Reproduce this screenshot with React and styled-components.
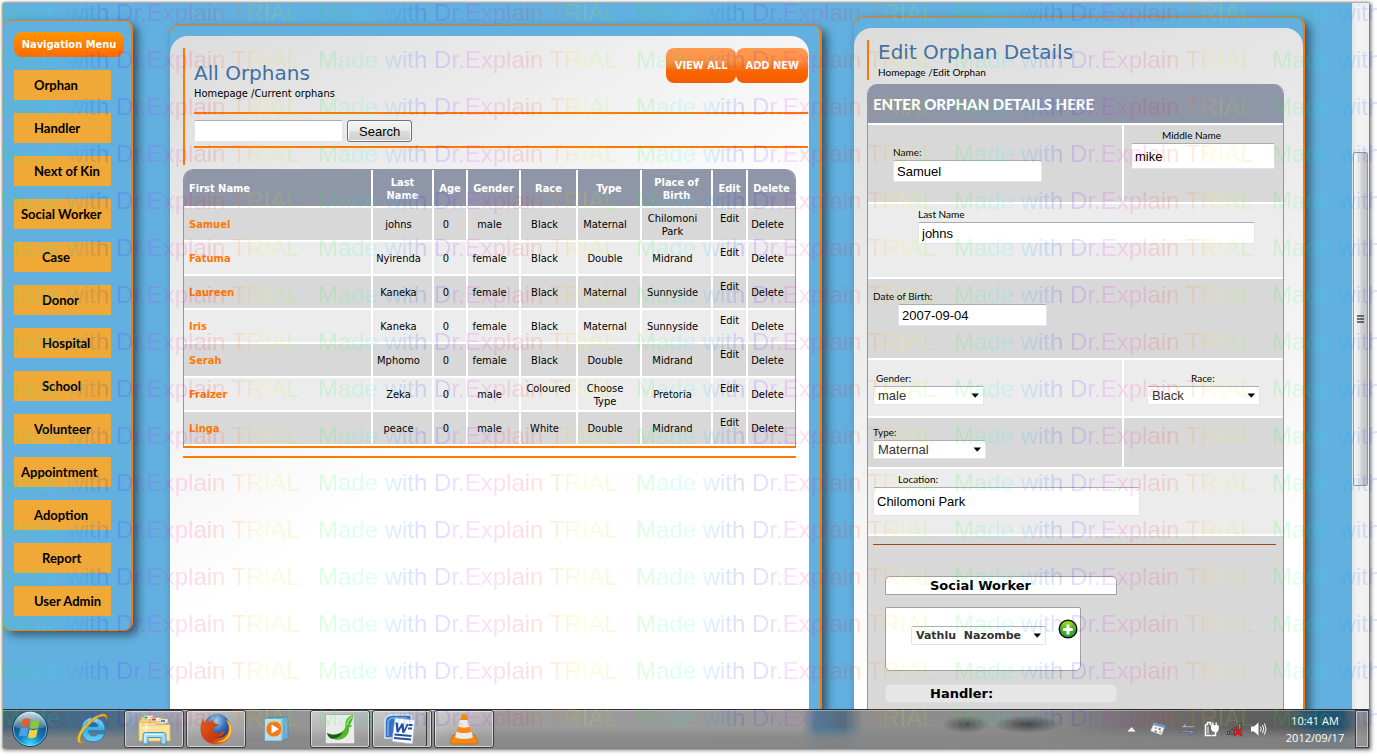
import React from 'react';
import styled, { createGlobalStyle, css } from 'styled-components';

const ui = '"DejaVu Sans Condensed", "DejaVu Sans", sans-serif';
const wide = '"DejaVu Sans", sans-serif';
const humanist = 'Lato, sans-serif';
const control = '"Liberation Sans", Arial, sans-serif';
const orange = '#ff7800';
const slate = '#8f96a8';

const Global = createGlobalStyle`
  * { box-sizing: border-box; }
  html, body { margin: 0; height: 100%; background: #fff; }
  body { font: 11px/13px ${ui}; color: #000; }
  a { color: inherit; text-decoration: none; }
  h1, h2, p { margin: 0; font-weight: normal; }
  button, input, select { font-family: ${control}; font-size: 13px; margin: 0; }
`;

const Screen = styled.div`
  position: relative;
  height: 100vh;
  padding: 3px 8px 8px 3px;
  overflow: hidden;
`;

const Desktop = styled.div`
  height: 100%;
  display: flex;
  flex-direction: column;
  overflow: hidden;
  background: #62b0df;
  box-shadow: 0 0 2px rgba(0, 0, 0, 0.4), 1px 1px 4px 1px rgba(0, 0, 0, 0.55);
`;

const Browser = styled.div`
  flex: 1;
  min-height: 0;
  display: flex;
`;

const Page = styled.div`
  flex: 1;
  min-width: 0;
  display: flex;
  align-items: flex-start;
  padding-right: 47px;
  overflow: hidden;
`;

const frame = css`
  border: 1px solid ${orange};
  border-right-width: 2px;
  border-radius: 9px;
  box-shadow: 5px 4px 10px rgba(0, 0, 0, 0.5);
`;

/* ---------- navigation ---------- */

const Nav = styled.nav`
  ${frame}
  width: 131px;
  flex: none;
  margin: 17px 36px 0 -1px;
  padding: 11px 7px 14px 11px;
  display: flex;
  flex-direction: column;
  align-items: flex-start;
  gap: 13px;
`;

const NavTitle = styled.h2`
  align-self: stretch;
  height: 25px;
  border-radius: 8px;
  background: linear-gradient(#ff9500, #ff6a00);
  color: #fff;
  font: bold 11px/25px ${ui};
  text-align: center;
  white-space: nowrap;
`;

const indents = { near: '7px', middle: '20px', far: '28px' };

const NavItem = styled.a`
  width: 97px;
  height: 30px;
  padding-left: ${(p) => indents[p.$indent]};
  background: #f0a836;
  font: 700 13px/30px ${humanist};
  white-space: nowrap;
`;

/* ---------- shared panel parts ---------- */

const Panel = styled.section`
  ${frame}
  flex: ${(p) => p.$grow} 1 0;
  min-width: 0;
  height: 1100px;
  margin-top: ${(p) => p.$top};
  margin-right: ${(p) => p.$after || 0};
  padding: 10px ${(p) => p.$gutter || 0} 0 0;
`;

const Sheet = styled.div`
  height: 100%;
  padding-top: 12px;
  border-radius: 18px 18px 0 0;
  background: ${(p) => p.$fill};
`;

const Title = styled.h1`
  color: #416fa3;
  font: 20px/24px ${wide};
`;

const Rule = styled.hr`
  margin: 0;
  border: 0;
  height: 1px;
  background: #9a4a10;
`;

const TextBox = styled.input`
  display: block;
  width: ${(p) => p.$width};
  height: ${(p) => p.$height || '22px'};
  margin-left: ${(p) => p.$inset || 0};
  padding: 0 3px;
  border: 1px solid #e3e4ea;
  border-top-color: #abadb3;
  border-radius: 2px;
  background: #fff;
  color: #000;
`;

/* ---------- orphan list ---------- */

const ListHeader = styled.header`
  margin-left: 13px;
  padding-left: 9px;
  height: 117px;
  border-left: 2px solid ${orange};
`;

const ListTop = styled.div`
  display: flex;
  justify-content: space-between;
  height: 64px;
  margin-right: 1px;
`;

const ListHeading = styled.div`
  padding-top: 13px;
`;

const Crumbs = styled.p`
  padding-top: 2px;
  font: ${(p) => p.$font};
`;

const Actions = styled.div`
  display: flex;
`;

const ActionButton = styled.button`
  height: 35px;
  padding: 0 9px;
  border: 0;
  border-radius: 8px;
  background: linear-gradient(#ff9a50, #ff9040 38%, #fa6400 68%, #f25c00);
  color: #fff;
  font: bold 11px/13px ${ui};
`;

const SearchBar = styled.form`
  display: flex;
  gap: 4px;
  padding: 6px 0 4px;
  margin-right: 1px;
  border: solid ${orange};
  border-width: 2px 0;
`;

const SearchButton = styled.button`
  height: 22px;
  padding: 0 11px;
  border: 1px solid #707070;
  border-radius: 3px;
  background: linear-gradient(#f3f3f3, #ebebeb 49%, #dcdcdc 50%, #cfcfcf);
  box-shadow: inset 0 0 0 1px #fafafa;
  color: #000;
`;

const ListBody = styled.div`
  margin: 4px 13px 0;
`;

const Table = styled.table`
  width: 100%;
  table-layout: fixed;
  border-spacing: 0;
  border: 1px solid ${slate};
  border-bottom: 0;
  border-radius: 10px 10px 0 0;
  overflow: hidden;
  font: 11px/13px ${ui};

  th, td {
    height: 34px;
    padding: 1px 0 0;
    text-align: center;
    border: solid #fff;
    border-width: 0 2px 2px 0;
  }
  th:last-child, td:last-child { border-right: 0; }
  th { height: 38px; background: ${slate}; color: #fff; }
  th:first-child { text-align: left; padding-left: 5px; }
  td { padding-right: 8px; }
  tr:nth-child(odd) td { background: #d8d8d8; }
  tr:nth-child(even) td { background: #ececec; }
`;

const NameCell = styled.td`
  && { text-align: left; padding: 1px 0 0 5px; }
  color: ${orange};
  font-weight: bold;
`;

const TopCell = styled.td`
  && { vertical-align: top; padding: 4px 0 0; }
`;

const ListEnd = styled.div`
  height: 12px;
  border: solid ${orange};
  border-width: 2px 0;
`;

/* ---------- edit form ---------- */

const EditBody = styled.div`
  padding: 0 19px 0 13px;
`;

const EditHeader = styled.header`
  height: 40px;
  padding-left: 9px;
  border-left: 2px solid ${orange};
`;

const Form = styled.form`
  margin-top: 4px;
  border: 1px solid ${slate};
  border-width: 0 1px;
  border-radius: 10px 10px 0 0;
  overflow: hidden;
`;

const FormTitle = styled.h2`
  height: 41px;
  padding-left: 5px;
  background: ${slate};
  border-bottom: 2px solid #fff;
  color: #fff;
  font: 900 15px/41px ${humanist};
`;

const FormRow = styled.div`
  display: grid;
  grid-template-columns: ${(p) => (p.$split ? 'minmax(0, 1fr) 159px' : 'minmax(0, 1fr)')};
  gap: 2px;
  min-height: ${(p) => p.$height};
  background: #fff;
  border-bottom: 2px solid #fff;
`;

const Cell = styled.div`
  padding: ${(p) => p.$pad || 0};
  background: ${(p) => (p.$dark ? '#d8d8d8' : '#ececec')};
`;

const Label = styled.label`
  display: block;
  margin-bottom: 2px;
  padding-left: ${(p) => p.$indent || 0};
  font: 10px/12px ${humanist};
`;

const SelectShell = styled.span`
  display: inline-grid;
  width: ${(p) => p.$width};

  > * { grid-area: 1 / 1; }
  > svg { align-self: center; justify-self: end; margin-right: 4px; pointer-events: none; }
`;

const Select = styled.select`
  appearance: none;
  width: 100%;
  height: 19px;
  padding: 0 4px;
  border: 1px solid #e3e4ea;
  border-top-color: #abadb3;
  border-radius: 2px;
  background: #fff;
  color: #333;
  ${(p) => p.$bold && css`font: bold 11px/15px ${wide};`}
`;

const Staff = styled.div`
  height: 400px;
  padding: 8px 7px 0 5px;
  background: #d8d8d8;
`;

const StaffTitle = styled.h2`
  width: 232px;
  height: 19px;
  margin: ${(p) => p.$gap} 0 0 12px;
  padding-left: 44px;
  border: 1px solid ${(p) => (p.$plain ? '#dcdcdc' : '#a0a0a0')};
  border-radius: ${(p) => (p.$plain ? '5px' : '5px 5px 0 0')};
  background: ${(p) => (p.$plain ? '#e6e6e6' : '#fff')};
  font: bold 13px/17px ${wide};
`;

const StaffBox = styled.div`
  display: flex;
  align-items: flex-start;
  justify-content: space-between;
  width: 196px;
  height: 64px;
  margin: 12px 0 0 12px;
  padding: 11px 2px 0 25px;
  border: 1px solid #a0a0a0;
  border-radius: 2px 2px 5px 5px;
  background: #fff;

  > span { margin-top: 7px; }
`;

const AddButton = styled.button`
  width: 20px;
  height: 20px;
  padding: 0;
  border: 0;
  background: none;
  svg { display: block; }
`;

/* ---------- scroll bar ---------- */

const ScrollTrack = styled.div`
  width: 17px;
  flex: none;
  padding: 149px 1px 0;
  background: linear-gradient(90deg, #e4e4e4, #f2f2f2 30%, #f0f0f0);
`;

const ScrollThumb = styled.div`
  display: flex;
  align-items: center;
  justify-content: center;
  height: 334px;
  border: 1px solid #979797;
  border-radius: 2px;
  background: linear-gradient(90deg, #f6f6f6, #e6e6e8 45%, #cfd0d4 55%, #c0c2c8);
`;

/* ---------- task bar ---------- */

const TaskBar = styled.footer`
  flex: none;
  display: flex;
  align-items: center;
  height: 39px;
  padding-left: 8px;
  border-top: 1px solid #2a2c30;
  box-shadow: inset 0 1px 0 rgba(255, 255, 255, 0.35);
  background:
    radial-gradient(24px 9px at 70.5% 38%, rgba(40, 40, 40, 0.6), transparent),
    radial-gradient(34px 9px at 75% 38%, rgba(40, 40, 40, 0.7), transparent),
    linear-gradient(rgba(134, 134, 134, 0) 45%, rgba(134, 134, 134, 0.85) 75%),
    linear-gradient(90deg, #45637b, #4d6c86 10%, #8f8f8f 14%, #9c9c9c 30%, #9a9a9a 58.5%, #4f7c98 59.5%, #4a7188 61.5%, #8e8e8e 63%, #8c8c8c 76%, #757575 82%, #626262 90%, #5c5c5c 94%, #24516b 96%, #24516b 98%, #666 99%);
`;

const Orb = styled.button`
  width: 38px;
  height: 38px;
  margin-right: 13px;
  padding: 0;
  border: 0;
  background: none;
  svg { display: block; }
`;

const Tasks = styled.div`
  flex: 1;
  display: flex;
  gap: 2px;
`;

const Task = styled.button`
  display: flex;
  align-items: center;
  justify-content: center;
  width: 60px;
  height: 38px;
  padding: 0;
  border: 1px solid transparent;
  border-radius: 3px;
  background: none;
  ${(p) => p.$open && css`
    border-color: #3c3c3c;
    box-shadow: inset 0 0 0 1px rgba(255, 255, 255, 0.55);
    background: linear-gradient(160deg, rgba(255, 255, 255, 0.5), rgba(255, 255, 255, 0.2) 55%, rgba(255, 255, 255, 0.12));
  `}
  ${(p) => p.$stacked && css`
    padding-right: 5px;
    box-shadow: inset 0 0 0 1px rgba(255, 255, 255, 0.55), inset -4px 0 0 #a8a8a8, inset -5px 0 0 #3c3c3c;
  `}
`;

const Tray = styled.div`
  display: flex;
  align-items: center;
  gap: 7px;
  svg { display: block; }
`;

const Clock = styled.time`
  width: 74px;
  padding-left: 8px;
  color: #fff;
  font: 11px/17px "Open Sans", sans-serif;
  text-align: center;
  white-space: nowrap;
`;

const ShowDesktop = styled.button`
  width: 14px;
  height: 38px;
  padding: 0;
  border: 1px solid #3c3c3c;
  box-shadow: inset 0 0 0 1px rgba(255, 255, 255, 0.45);
  background: linear-gradient(135deg, rgba(255, 255, 255, 0.3), rgba(255, 255, 255, 0.1));
`;

/* ---------- trial watermark ---------- */

const Watermark = styled.div`
  position: absolute;
  inset: 0;
  overflow: hidden;
  pointer-events: none;
  opacity: 0.13;
  font: 24px/25px ${control};
`;

const WatermarkRow = styled.div`
  display: flex;
  height: 47px;
`;

const WatermarkText = styled.span`
  flex: none;
  width: 318px;
  height: 27px;
  white-space: nowrap;
  color: transparent;
  background: linear-gradient(90deg, #0f0, #0ff, #00f, #f0f, #f00, #ff0, #0f0);
  background-clip: text;
  -webkit-background-clip: text;
`;

/* ---------- drawings ---------- */

const Caret = () => (
  <svg width="9" height="5" viewBox="0 0 9 5" aria-hidden="true"><path d="M0.5 0.5H8L4.5 4.5H4z" fill="#000" /></svg>
);

const PlusIcon = () => (
  <svg width="20" height="20" viewBox="0 0 20 20" aria-hidden="true">
    <defs>
      <linearGradient id="plus" x1="0" y1="0" x2="0" y2="1">
        <stop offset="0" stopColor="#a5e31b" /><stop offset="0.5" stopColor="#4fb81c" /><stop offset="1" stopColor="#23a033" />
      </linearGradient>
    </defs>
    <circle cx="10" cy="10" r="8.8" fill="url(#plus)" stroke="#111" strokeWidth="1.4" />
    <path d="M10 5.5v10M5 10.5h10" stroke="#fff" strokeWidth="3" />
  </svg>
);

const OrbIcon = () => (
  <svg width="38" height="38" viewBox="0 0 38 38" aria-hidden="true">
    <defs>
      <radialGradient id="orb" cx="0.5" cy="0.95" r="0.9">
        <stop offset="0" stopColor="#3fe0ff" /><stop offset="0.35" stopColor="#1285c4" /><stop offset="0.75" stopColor="#1a4c7c" /><stop offset="1" stopColor="#4a7ba6" />
      </radialGradient>
      <linearGradient id="gloss" x1="0" y1="0" x2="0" y2="1">
        <stop offset="0" stopColor="#fff" stopOpacity="0.75" /><stop offset="1" stopColor="#fff" stopOpacity="0.15" />
      </linearGradient>
    </defs>
    <circle cx="19" cy="19" r="17.5" fill="url(#orb)" stroke="#1c3c5a" />
    <circle cx="19" cy="19" r="16.5" fill="none" stroke="#a9d4ee" strokeOpacity="0.7" />
    <path d="M3.5 17a15.5 15.5 0 0 1 31 0c-9 3-22 3-31 0z" fill="url(#gloss)" />
    <path d="M11.5 9.5c3-1.700 5.500-1.500 8-.2l-1.700 8c-2.500-1.300-5-1.300-8 0z" fill="#e9592a" />
    <path d="M20.600 9.900c2.700 1.300 5.200 1.300 8.200-.2l-1.700 8c-3 1.500-5.500 1.500-8.200.2z" fill="#8fc63d" />
    <path d="M9.500 18.600c3-1.400 5.500-1.300 8 0l-1.700 8c-2.500-1.300-5-1.300-8 0z" fill="#4da3e0" />
    <path d="M18.600 19.200c2.700 1.300 5.200 1.300 8.200-.2l-1.700 8c-3 1.500-5.500 1.500-8.200.2z" fill="#fbd03b" />
  </svg>
);

const ExplorerIcon = () => (
  <svg width="34" height="34" viewBox="0 0 34 34" aria-hidden="true">
    <defs>
      <linearGradient id="ie" x1="0" y1="0" x2="0" y2="1">
        <stop offset="0" stopColor="#8fe2fb" /><stop offset="0.5" stopColor="#35aee8" /><stop offset="1" stopColor="#6fd0f6" />
      </linearGradient>
    </defs>
    <path d="M18 5.500c7 0 12.500 5 12.200 13.200H13.600c.3 3.500 2.200 5.300 5 5.300 2 0 3.300-.9 4-2.300h7c-1.500 5-5.700 8-11.200 8C11.300 29.700 6.500 25 6.500 17.700 6.500 10.300 11.200 5.500 18 5.500zm-4.300 9.200h9.400c-.2-2.700-2-4.300-4.600-4.300s-4.400 1.600-4.800 4.300z" fill="url(#ie)" stroke="#1677b8" strokeWidth="0.8" />
    <path d="M31.500 9C33 5 32 1.800 28.500 1.800 21 1.800 5 14.500 2.600 25.500c-1 5 2 6.800 6.200 4.700-2.800.6-4-.6-3.600-3.400C6.500 18 19.500 5.500 27.500 4.200c3-.5 4 1.500 4 4.800z" fill="#f6c22c" stroke="#b98a10" strokeWidth="0.600" />
  </svg>
);

const FolderIcon = () => (
  <svg width="36" height="32" viewBox="0 0 36 32" aria-hidden="true">
    <path d="M3 7h2V4h12v3h13v21H3z" fill="#f1d277" stroke="#c7a147" strokeWidth="0.800" />
    <path d="M8 2.500h9v4H8zM15 4.500h10v4H15zM23 6h9v4h-9z" fill="#fbf7e8" stroke="#ccb675" strokeWidth="0.600" />
    <path d="M8.500 3.500h3v2h-3z" fill="#1fae3b" /><path d="M16 5.500h4v2h-4z" fill="#e24535" /><path d="M25 7h4v2h-4z" fill="#3b8fe0" />
    <path d="M3 9.500h15l3 2h13V28H3z" fill="#f9e49a" stroke="#d8b65a" strokeWidth="0.700" />
    <path d="M7 31v-9q0-2.500 2.500-2.500h18Q30 19.500 30 22v9h-5v-6.500H12V31z" fill="#a4d9f2" stroke="#3d8fbb" strokeWidth="0.900" />
    <path d="M9 29v-6.500q0-1 1-1h17" fill="none" stroke="#e6f8ff" strokeWidth="1.200" />
    <path d="M10 11v8M6 15h8" stroke="#fff" strokeWidth="1" opacity="0.800" />
  </svg>
);

const FirefoxIcon = () => (
  <svg width="34" height="34" viewBox="0 0 34 34" aria-hidden="true">
    <defs>
      <radialGradient id="globe" cx="0.45" cy="0.25" r="0.8"><stop offset="0" stopColor="#9fd8f8" /><stop offset="0.500" stopColor="#2b6fc0" /><stop offset="1" stopColor="#152a66" /></radialGradient>
      <linearGradient id="fox" x1="0" y1="0" x2="1" y2="1"><stop offset="0" stopColor="#e2611b" /><stop offset="0.600" stopColor="#c9390f" /><stop offset="1" stopColor="#f39a1f" /></linearGradient>
    </defs>
    <circle cx="18" cy="15" r="13" fill="url(#globe)" />
    <path d="M4 6c0 2 .4 3 1.500 4 2-1 4-1 6 0 .5-1.500 1.500-2.500 3-3-.5 2 0 3.500 1.500 4.500l3.500 1c-.2 1.800-2.500 2-4 3-1 1-.5 2.500-1.500 3.500 2.500 3 6.500 2.500 9 .5 1.500-1 3-.5 2.500 1-1.500 3.500-6 5-9.500 4.500 7 2.500 13-1.500 13.500-8.500.2-4-1-7-3-9.500 4 2 6 6 6 10.500C32.500 26.500 26 32.500 17.500 32.500 8.500 32.500 1.500 26 1.500 17.500 1.500 13 2.500 9 4 6z" fill="url(#fox)" />
    <path d="M27 8c4 5 4.500 12 .5 17-2.500 3-6 4.500-10 4.500 7 2 14-3 15-10.500.5-5-1.500-9-5.500-11z" fill="#fcc934" />
  </svg>
);

const MediaIcon = () => (
  <svg width="32" height="30" viewBox="0 0 32 30" aria-hidden="true">
    <path d="M8 3h18v22H8z" fill="#6db4d8" stroke="#3d86b0" strokeWidth="0.700" />
    <path d="M5 3.500h17V26H5z" fill="#8dcbe8" stroke="#3d86b0" strokeWidth="0.700" />
    <path d="M2.500 4.500H20V27H2.500z" fill="#b4dff2" stroke="#5698bd" strokeWidth="0.700" />
    <circle cx="12" cy="15" r="8" fill="#ee7a1c" stroke="#fbc18a" />
    <path d="M9.500 10.500v9l7.500-4.500z" fill="#fff" />
  </svg>
);

const DrExplainIcon = () => (
  <svg width="34" height="32" viewBox="0 0 34 32" aria-hidden="true">
    <path d="M2.500 1.500h29v29h-29z" fill="#e9ece9" stroke="#aaa" strokeWidth="0.800" />
    <path d="M30 2c-4 1-7 4-7.500 8-.3 2 .5 3-.5 5-2 4-6 6-10.500 6.500-3 .2-5.500-.3-7.500-2 2.500 6.500 11 9.500 17 5.500 4-2.700 5.500-6.500 5-10.500 1.500-.3 2.500-1.200 3-2.500-1 .2-1.800 0-2.300-.6 2-2 3.500-5 3.300-9.400z" fill="#57b52c" />
    <path d="M4 20c4.500 2.500 11 2.700 16-1.500-2 5-7 8-12 7-2.500-1-3.500-3-4-5.500z" fill="#145f1a" />
    <path d="M29 4c-3 2-4.500 4.500-5 8" fill="none" stroke="#b6e59a" strokeWidth="1.200" />
  </svg>
);

const WordIcon = () => (
  <svg width="34" height="32" viewBox="0 0 34 32" aria-hidden="true">
    <path d="M2 25V9q0-7 8-7h18v23z" fill="#3a6fc0" stroke="#dce8f8" strokeWidth="1.400" />
    <path d="M5 23V10q0-5 6-5h13" fill="none" stroke="#7eb0ea" strokeWidth="1.500" />
    <path d="M12 5l20 2-2.500 24L9 28.500z" fill="#fff" stroke="#9fb4d4" strokeWidth="0.800" />
    <path d="M12.500 9.500l2.500.3.500 6 3-5.600 2 .2.800 6 2.500-5.700 2 .2-4.500 9-2-.2-.8-5.500-3 5.200-2-.2z" fill="#2450a0" />
    <path d="M25.500 12h4M25 15.500h4M11.500 21.500l17 1.500M11 25l17 1.500" stroke="#2450a0" strokeWidth="1.800" />
  </svg>
);

const ConeIcon = () => (
  <svg width="30" height="34" viewBox="0 0 30 34" aria-hidden="true">
    <path d="M4 23h22l3 7q0 2-2 2H3q-2 0-2-2z" fill="#f58a12" stroke="#c2600a" strokeWidth="0.700" />
    <path d="M13 2h4l7.500 24c-3 3-16 3-19 0z" fill="#f58a12" />
    <path d="M11.200 8h7.600l2 6.500c-3 1.500-8.600 1.500-11.600 0zM7.700 19.500c3 2 11.600 2 14.600 0l1.700 5.500c-3 2.500-15 2.500-18 0z" fill="#e9edf0" />
  </svg>
);

const TrayArrow = () => (
  <svg width="9" height="6" viewBox="0 0 9 6" aria-hidden="true"><path d="M0.500 5.500L4.500 1l4 4.500z" fill="#fff" /></svg>
);
const TrayFlag = () => (
  <svg width="30" height="16" viewBox="-7 0 30 16" aria-hidden="true">
    <path d="M4 2l11 3-3.500 9L.5 10z" fill="#f4f6fa" stroke="#98a8c0" strokeWidth="0.500" />
    <path d="M4 2l11 3-.8 2L3.200 4z" fill="#5aa0e0" />
    <path d="M5 6l2 .6-.6 1.600-2-.6zM9.500 10l2 .6-.6 1.600-2-.6z" fill="#f0a020" /><path d="M9 7l2 .6-.6 1.600-2-.6zM5 9.500l2 .6-.5 1.400-2-.6z" fill="#3a78d0" />
  </svg>
);
const TrayLinks = () => (
  <svg width="16" height="16" viewBox="0 0 16 16" aria-hidden="true">
    <path d="M1 6.500L6 2v3h9v1.500z" fill="#aab0b8" stroke="#555" strokeWidth="0.400" /><path d="M15 9.500L10 14.500v-3H1v-2z" fill="#8488c4" stroke="#444" strokeWidth="0.400" />
  </svg>
);
const TrayPower = () => (
  <svg width="16" height="18" viewBox="0 0 16 18" aria-hidden="true">
    <path d="M2.500 4.500h2v-2h3v2h1M8 15.500H2.500v-11" fill="none" stroke="#fff" strokeWidth="1.600" />
    <path d="M5 6.500v7" stroke="#fff" strokeWidth="1" />
    <path d="M8 6h7v3q-.5 2.500-2.500 3v3.500H8.500" fill="none" stroke="#fff" strokeWidth="1.500" /><path d="M8 6h7v3q-1 3-3.500 3T8 9z" fill="#fff" /><path d="M9.800 6V2.500M13.200 6V2.500" stroke="#fff" strokeWidth="1.400" />
  </svg>
);
const TrayNetwork = () => (
  <svg width="17" height="16" viewBox="0 0 17 16" aria-hidden="true">
    <path d="M1.500 10.500h2v3h-2zM5 8.500h2v5H5zM8.500 6h2v7.500h-2zM12.500 2.500h2.500v11h-2.500z" fill="#8a8a8a" stroke="#333" strokeWidth="0.800" />
    <path d="M8 7l8 8M16 7l-8 8" stroke="#e01010" strokeWidth="2" />
  </svg>
);
const TraySound = () => (
  <svg width="17" height="16" viewBox="0 0 17 16" aria-hidden="true">
    <path d="M1 5.500h3L8.500 1.500v13L4 10.500H1z" fill="#fff" />
    <path d="M10.500 5.500q1.500 2.500 0 5M12.500 4q2.500 4 0 8M14.500 2.500q3 5.500 0 11" fill="none" stroke="#fff" strokeWidth="1" />
  </svg>
);

/* ---------- data ---------- */

const navItems = [
  ['Orphan', 'middle'], ['Handler', 'middle'], ['Next of Kin', 'middle'], ['Social Worker', 'near'],
  ['Case', 'far'], ['Donor', 'far'], ['Hospital', 'far'], ['School', 'far'], ['Volunteer', 'middle'],
  ['Appointment', 'near'], ['Adoption', 'middle'], ['Report', 'far'], ['User Admin', 'middle'],
];

const columns = [
  ['First Name'], ['Last Name', 61], ['Age', 34], ['Gender', 53], ['Race', 57], ['Type', 64],
  ['Place of Birth', 71], ['Edit', 35], ['Delete', 47],
];

const orphans = [
  ['Samuel', 'johns', '0', 'male', 'Black', 'Maternal', 'Chilomoni Park'],
  ['Fatuma', 'Nyirenda', '0', 'female', 'Black', 'Double', 'Midrand'],
  ['Laureen', 'Kaneka', '0', 'female', 'Black', 'Maternal', 'Sunnyside'],
  ['Iris', 'Kaneka', '0', 'female', 'Black', 'Maternal', 'Sunnyside'],
  ['Serah', 'Mphomo', '0', 'female', 'Black', 'Double', 'Midrand'],
  ['Fraizer', 'Zeka', '0', 'male', 'Coloured', 'Choose Type', 'Pretoria'],
  ['Linga', 'peace', '0', 'male', 'White', 'Double', 'Midrand'],
];

const DropDown = ({ id, width, bold, value, label }) => (
  <SelectShell $width={width}>
    <Select id={id} $bold={bold} aria-label={label}><option>{value}</option></Select>
    <Caret />
  </SelectShell>
);

const Navigation = () => (
  <Nav>
    <NavTitle>Navigation Menu</NavTitle>
    {navItems.map(([name, indent]) => <NavItem key={name} href="#" $indent={indent}>{name}</NavItem>)}
  </Nav>
);

const OrphanList = () => (
  <Panel $grow={639} $top="22px" $after="31px" $gutter="11px">
    <Sheet $fill="linear-gradient(146deg, #dcdcdc, #fff 497px)">
      <ListHeader>
        <ListTop>
          <ListHeading>
            <Title>All Orphans</Title>
            <Crumbs $font={`11px/13px ${ui}`}><a href="#">Homepage</a> /Current orphans</Crumbs>
          </ListHeading>
          <Actions>
            <ActionButton>VIEW ALL</ActionButton>
            <ActionButton>ADD NEW</ActionButton>
          </Actions>
        </ListTop>
        <SearchBar onSubmit={(e) => e.preventDefault()}>
          <TextBox $width="149px" aria-label="Search orphans" />
          <SearchButton>Search</SearchButton>
        </SearchBar>
      </ListHeader>
      <ListBody>
        <Table>
          <colgroup>{columns.map(([name, width]) => <col key={name} width={width} />)}</colgroup>
          <thead><tr>{columns.map(([name]) => <th key={name} scope="col">{name}</th>)}</tr></thead>
          <tbody>
            {orphans.map(([first, ...rest]) => (
              <tr key={first}>
                <NameCell><a href="#">{first}</a></NameCell>
                {rest.map((text, i) => (text === 'Coloured' ? <TopCell key={i}>{text}</TopCell> : <td key={i}>{text}</td>))}
                <TopCell><a href="#">Edit</a></TopCell>
                <td><a href="#">Delete</a></td>
              </tr>
            ))}
          </tbody>
        </Table>
        <ListEnd />
      </ListBody>
    </Sheet>
  </Panel>
);

const EditOrphan = () => (
  <Panel $grow={449} $top="14px">
    <Sheet $fill="linear-gradient(160deg, #dcdcdc, #fff 640px)">
      <EditBody>
        <EditHeader>
          <Title>Edit Orphan Details</Title>
          <Crumbs $font={`10px/12px ${humanist}`}><a href="#">Homepage</a> /Edit Orphan</Crumbs>
        </EditHeader>
        <Form onSubmit={(e) => e.preventDefault()}>
          <FormTitle>ENTER ORPHAN DETAILS HERE</FormTitle>
          <FormRow $split $height="79px">
            <Cell $dark $pad="21px 0 0 25px">
              <Label htmlFor="name">Name:</Label>
              <TextBox id="name" $width="149px" defaultValue="Samuel" />
            </Cell>
            <Cell $dark $pad="4px 0 0 7px">
              <Label htmlFor="middle" $indent="31px">Middle Name</Label>
              <TextBox id="middle" $width="144px" $height="26px" defaultValue="mike" />
            </Cell>
          </FormRow>
          <FormRow $height="75px">
            <Cell $pad="4px 28px 0 50px">
              <Label htmlFor="last">Last Name</Label>
              <TextBox id="last" $width="100%" defaultValue="johns" />
            </Cell>
          </FormRow>
          <FormRow $height="81px">
            <Cell $dark $pad="11px 0 0 5px">
              <Label htmlFor="birth">Date of Birth:</Label>
              <TextBox id="birth" $width="149px" $inset="25px" defaultValue="2007-09-04" />
            </Cell>
          </FormRow>
          <FormRow $split $height="58px">
            <Cell $pad="12px 0 0 5px">
              <Label htmlFor="gender" $indent="3px">Gender:</Label>
              <DropDown id="gender" width="111px" value="male" />
            </Cell>
            <Cell $pad="12px 0 0 23px">
              <Label htmlFor="race" $indent="44px">Race:</Label>
              <DropDown id="race" width="113px" value="Black" />
            </Cell>
          </FormRow>
          <FormRow $split $height="51px">
            <Cell $dark $pad="8px 0 0 5px">
              <Label htmlFor="type">Type:</Label>
              <DropDown id="type" width="113px" value="Maternal" />
            </Cell>
            <Cell $dark />
          </FormRow>
          <FormRow $height="67px">
            <Cell $pad="4px 0 0 5px">
              <Label htmlFor="location" $indent="25px">Location:</Label>
              <TextBox id="location" $width="267px" $height="29px" defaultValue="Chilomoni Park" />
            </Cell>
          </FormRow>
          <Staff>
            <Rule />
            <StaffTitle $gap="31px">Social Worker</StaffTitle>
            <StaffBox>
              <DropDown width="135px" bold value={'Vathlu\u00a0\u00a0Nazombe'} label="Social Worker" />
              <AddButton type="button" aria-label="Add social worker"><PlusIcon /></AddButton>
            </StaffBox>
            <StaffTitle $gap="13px" $plain>Handler:</StaffTitle>
          </Staff>
        </Form>
      </EditBody>
    </Sheet>
  </Panel>
);

const tasks = [
  ['Internet Explorer', ExplorerIcon, false],
  ['Windows Explorer', FolderIcon, true],
  ['Firefox', FirefoxIcon, true],
  ['Media Player', MediaIcon, false],
  ['Dr.Explain', DrExplainIcon, true],
  ['Word', WordIcon, true, true],
  ['VLC', ConeIcon, true],
];

export default function App() {
  return (
    <Screen>
      <Global />
      <Desktop>
        <Browser>
          <Page>
            <Navigation />
            <OrphanList />
            <EditOrphan />
          </Page>
          <ScrollTrack>
            <ScrollThumb>
              <svg width="8" height="9" viewBox="0 0 8 9" aria-hidden="true"><path d="M0 1h7M0 4h7M0 7h7" stroke="#444" strokeWidth="1.500" /></svg>
            </ScrollThumb>
          </ScrollTrack>
        </Browser>
        <TaskBar>
          <Orb aria-label="Start"><OrbIcon /></Orb>
          <Tasks>
            {tasks.map(([name, Icon, open, stacked]) => (
              <Task key={name} aria-label={name} $open={open} $stacked={stacked}><Icon /></Task>
            ))}
          </Tasks>
          <Tray>
            <TrayArrow /><TrayFlag /><TrayLinks /><TrayPower /><TrayNetwork /><TraySound />
            <Clock>10:41 AM<br />2012/09/17</Clock>
            <ShowDesktop aria-label="Show desktop" />
          </Tray>
        </TaskBar>
      </Desktop>
      <Watermark aria-hidden="true">
        {Array.from({ length: 16 }, (_, row) => (
          <WatermarkRow key={row}>
            {Array.from({ length: 5 }, (_, n) => (
              <WatermarkText key={n}>Made with Dr.Explain TRIAL</WatermarkText>
            ))}
          </WatermarkRow>
        ))}
      </Watermark>
    </Screen>
  );
}
